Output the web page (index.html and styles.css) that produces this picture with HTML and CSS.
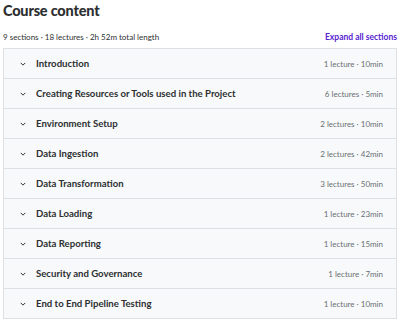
FILE: index.html
```html
<!DOCTYPE html>
<html lang="en">
<head>
  <meta charset="UTF-8" />
  <title>Course content</title>
  <link rel="stylesheet" href="styles.css">
</head>
<body>
  <h2 class="title">Course content</h2>
  <div class="meta-row">
    <span class="meta">9 sections · 18 lectures · 2h 52m total length</span>
    <a class="expand" href="#">Expand all sections</a>
  </div>

  <div class="sections">
    <div class="section"><svg class="chev" viewBox="0 0 8 5"><path d="M1 1l3 3 3-3"/></svg><span class="name">Introduction</span><span class="info">1 lecture · 10min</span></div>
    <div class="section"><svg class="chev" viewBox="0 0 8 5"><path d="M1 1l3 3 3-3"/></svg><span class="name">Creating Resources or Tools used in the Project</span><span class="info">6 lectures · 5min</span></div>
    <div class="section"><svg class="chev" viewBox="0 0 8 5"><path d="M1 1l3 3 3-3"/></svg><span class="name">Environment Setup</span><span class="info">2 lectures · 10min</span></div>
    <div class="section"><svg class="chev" viewBox="0 0 8 5"><path d="M1 1l3 3 3-3"/></svg><span class="name">Data Ingestion</span><span class="info">2 lectures · 42min</span></div>
    <div class="section"><svg class="chev" viewBox="0 0 8 5"><path d="M1 1l3 3 3-3"/></svg><span class="name">Data Transformation</span><span class="info">3 lectures · 50min</span></div>
    <div class="section"><svg class="chev" viewBox="0 0 8 5"><path d="M1 1l3 3 3-3"/></svg><span class="name">Data Loading</span><span class="info">1 lecture · 23min</span></div>
    <div class="section"><svg class="chev" viewBox="0 0 8 5"><path d="M1 1l3 3 3-3"/></svg><span class="name">Data Reporting</span><span class="info">1 lecture · 15min</span></div>
    <div class="section"><svg class="chev" viewBox="0 0 8 5"><path d="M1 1l3 3 3-3"/></svg><span class="name">Security and Governance</span><span class="info">1 lecture · 7min</span></div>
    <div class="section"><svg class="chev" viewBox="0 0 8 5"><path d="M1 1l3 3 3-3"/></svg><span class="name">End to End Pipeline Testing</span><span class="info">1 lecture · 10min</span></div>
  </div>
</body>
</html>
```

FILE: styles.css
```css
body {
  margin: 0;
  padding: 0 3px;
  font-family: Lato, "Liberation Sans", sans-serif;
  color: #2d2f31;
  background: #fff;
}
.title {
  margin: 0;
  padding-top: 1px;
  font-size: 14.5px;
  font-weight: 900;
  letter-spacing: -0.2px;
  line-height: 20px;
}
.meta-row {
  display: flex;
  justify-content: space-between;
  align-items: center;
  margin-top: 10px;
  height: 12px;
  font-size: 8px;
}
.meta {
  color: #2d2f31;
}
.expand {
  color: #5624d0;
  font-weight: 700;
  text-decoration: none;
  font-size: 8.5px;
}
.sections {
  margin-top: 5px;
  border: 1px solid #dce1e4;
}
.section {
  display: flex;
  align-items: center;
  height: 29px;
  padding: 0 13px 0 16px;
  background: #f7f9fa;
  border-bottom: 1px solid #dce1e4;
}
.section:last-child {
  border-bottom: none;
}
.chev {
  width: 6px;
  height: 4px;
  margin-right: 10px;
  fill: none;
  stroke: #2d2f31;
  stroke-width: 1.3;
}
.name {
  flex: 1;
  font-weight: 700;
  font-size: 9.6px;
}
.info {
  color: #6a6f73;
  font-size: 8px;
}
```
